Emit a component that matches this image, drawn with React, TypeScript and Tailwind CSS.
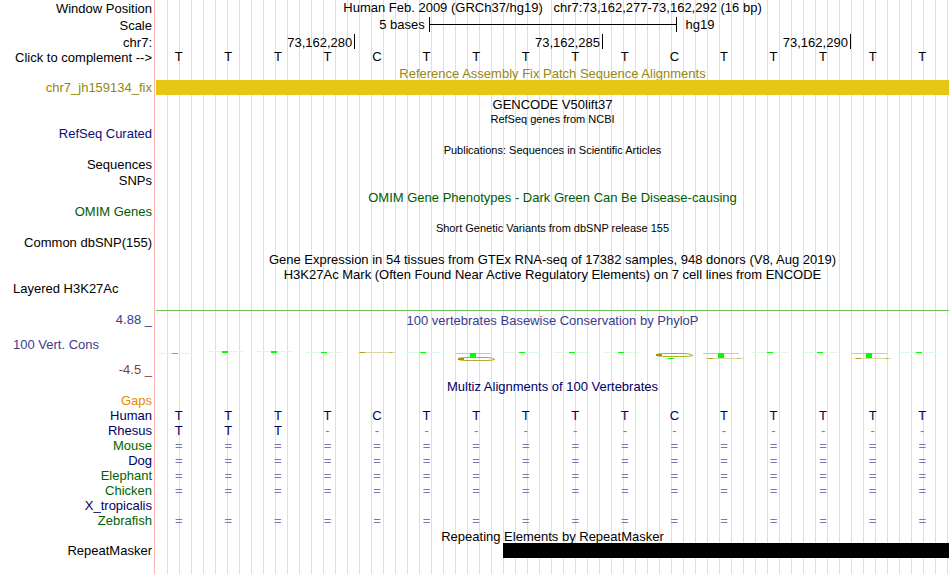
const SEQUENCE = "TTTTCTTTTTCTTTTT";

const labels = [
  { text: "Window Position", className: "h-4" },
  { text: "Scale", className: "h-[17px]" },
  { text: "chr7:", className: "h-[17px]" },
  { text: "Click to complement -->", className: "h-[15px]" },
  { text: "chr7_jh159134_fix", className: "h-[30px] text-[#968710]" },
  { text: "RefSeq Curated", className: "h-[46px] text-[#0c0c78]" },
  { text: "Sequences", className: "h-[31px]" },
  { text: "SNPs", className: "h-4" },
  { text: "OMIM Genes", className: "h-[31px] text-[#005a00]" },
  { text: "Common dbSNP(155)", className: "h-[31px]" },
  { text: "Layered H3K27Ac", className: "h-[46px]", left: true },
  { text: "4.88 _", className: "h-[31px] text-[#3c3c8c]" },
  { text: "100 Vert. Cons", className: "h-[25px] text-[#3c3c8c]", left: true },
  { text: "-4.5 _", className: "h-[25px] text-[#8c3c3c]" },
  { text: "Gaps", className: "h-[31px] text-[#e68c00]" },
  { text: "Human", className: "h-[15px] text-[#000064]" },
  { text: "Rhesus", className: "h-[15px] text-[#000064]" },
  { text: "Mouse", className: "h-[15px] text-[#006400]" },
  { text: "Dog", className: "h-[15px] text-[#000064]" },
  { text: "Elephant", className: "h-[15px] text-[#006400]" },
  { text: "Chicken", className: "h-[15px] text-[#006400]" },
  { text: "X_tropicalis", className: "h-[15px] text-[#000064]" },
  { text: "Zebrafish", className: "h-[15px] text-[#006400]" },
  { text: "RepeatMasker", className: "h-[30px]" },
];

const alignments = [
  { species: "Human", bases: SEQUENCE },
  { species: "Rhesus", bases: "TTT-------------" },
  { species: "Mouse", bases: "================" },
  { species: "Dog", bases: "================" },
  { species: "Elephant", bases: "================" },
  { species: "Chicken", bases: "================" },
  { species: "X_tropicalis", bases: "                " },
  { species: "Zebrafish", bases: "================" },
];

// One entry per base: where its flattened T sits and how tall the stem is.
const scores = [
  { y: 25, stem: 1 },
  { y: 23, stem: 2 },
  { y: 23, stem: 2 },
  { y: 24, stem: 1 },
  { y: 24, stem: 0, line: true },
  { y: 24, stem: 1 },
  { y: 25, stem: 4, strong: true, oval: 29 },
  { y: 24, stem: 1 },
  { y: 24, stem: 1 },
  { y: 24, stem: 1 },
  { y: 30, stem: 1, oval: 25 },
  { y: 25, stem: 5, strong: true, line: true },
  { y: 24, stem: 1 },
  { y: 24, stem: 1 },
  { y: 25, stem: 5, strong: true, line: true },
  { y: 24, stem: 1 },
];

function TrackTitle({ text, className = "" }: { text: string; className?: string }) {
  return <h2 className={`flex items-end justify-center whitespace-pre ${className}`}>{text}</h2>;
}

function BaseRow({ bases, className = "" }: { bases: string; className?: string }) {
  return (
    <div className={`grid h-[15px] grid-cols-16 text-center ${className}`}>
      {bases.split("").map((base, index) => (
        <span key={index} className={/[-=]/.test(base) ? "pr-1 text-[#7878b4]" : "pr-1"}>
          {base}
        </span>
      ))}
    </div>
  );
}

function ScaleBar() {
  return (
    <div className="flex h-[17px] items-end">
      <span className="w-[34.4%] pr-1 text-right">5 bases</span>
      <div className="flex h-[15px] w-[31.25%] items-center border-x border-black">
        <div className="h-px w-full bg-black" />
      </div>
      <span className="pl-[9px]">hg19</span>
    </div>
  );
}

function Ruler() {
  return (
    <div className="grid grid-cols-16 pt-[2px] text-right leading-[17px]">
      <span className="col-span-4 h-[15px] pr-[2px]">73,162,280</span>
      <span className="col-span-5 h-[15px] border-l border-black pr-[2px]">73,162,285</span>
      <span className="col-span-5 h-[15px] border-l border-black pr-[2px]">73,162,290</span>
      <span className="col-span-2 h-[15px] border-l border-black" />
    </div>
  );
}

function Oval({ x, y }: { x: number; y: number }) {
  return (
    <g shapeRendering="auto">
      <path
        d={`M${x + 39} ${y + 2}Q${x + 37} ${y + 0.5} ${x + 31} ${y + 0.5}H${x + 12}Q${x + 4} ${y + 0.5} ${x + 3} ${y + 2}Q${x + 4} ${y + 3.5} ${x + 12} ${y + 3.5}H${x + 31}Q${x + 38} ${y + 3.5} ${x + 40} ${y + 2.4}`}
        fill="none"
        stroke="#b4aa32"
      />
      <rect x={x + 3} y={y + 1} width="6" height="2" fill="#a09600" />
    </g>
  );
}

function ConservationLogo() {
  return (
    <svg viewBox="0 0 793 51" preserveAspectRatio="none" className="block h-[51px] w-full" aria-hidden="true">
      {scores.map((score, index) => {
        const x = Math.round(1 + index * 49.6);
        const lineY = score.strong ? 30 : 24;
        return (
          <g key={index} shapeRendering="crispEdges">
            {score.stem > 0 && <rect x={x} y={score.y} width="36" height="1" fill={score.strong ? "#78fa8c" : "#dcfae1"} />}
            {score.stem > 0 && <rect x={x + 15} y={score.y} width="6" height={score.stem} fill="#00ff00" />}
            {score.line && (
              <>
                <rect x={x + 3} y={lineY} width="37" height="1" fill="#dcd7a5" />
                <rect x={x + 5} y={lineY} width="5" height="1" fill="#aaa01e" />
                <rect x={x + 34} y={lineY} width="3" height="1" fill="#bcb450" />
              </>
            )}
            {score.oval && <Oval x={x} y={score.oval} />}
          </g>
        );
      })}
    </svg>
  );
}

export default function App() {
  return (
    <main className="flex min-h-screen bg-white pr-px font-['Liberation_Sans',Arial,sans-serif] text-[13px] leading-[15px] text-black">
      <div className="w-[154px] shrink-0 pr-[2px] pl-[13px]">
        {labels.map((label) => (
          <div
            key={label.text}
            className={`flex items-end whitespace-nowrap ${label.left ? "justify-start" : "justify-end"} ${label.className}`}
          >
            {label.text}
          </div>
        ))}
      </div>

      <div className="mr-px w-px shrink-0 bg-[#ffb4b4]" />

      <div className="min-w-0 flex-1 bg-[repeating-linear-gradient(to_right,transparent_0px_11px,#dcdcf5_11px_12px)]">
        <TrackTitle text="Human Feb. 2009 (GRCh37/hg19)   chr7:73,162,277-73,162,292 (16 bp)" className="h-[15px]" />
        <ScaleBar />
        <Ruler />
        <BaseRow bases={SEQUENCE} />

        <TrackTitle text="Reference Assembly Fix Patch Sequence Alignments" className="h-4 leading-[13px] text-[#968710]" />
        <div className="relative h-[15px] bg-[#e6c814]" />

        <TrackTitle text="GENCODE V50lift37" className="h-[17px]" />
        <TrackTitle text="RefSeq genes from NCBI" className="h-[15px] text-[11px]" />
        <TrackTitle text="Publications: Sequences in Scientific Articles" className="h-[31px] text-[11px]" />
        <TrackTitle text="OMIM Gene Phenotypes - Dark Green Can Be Disease-causing" className="h-[47px] text-[#005a00]" />
        <TrackTitle text="Short Genetic Variants from dbSNP release 155" className="h-[31px] text-[11px]" />
        <TrackTitle
          text="Gene Expression in 54 tissues from GTEx RNA-seq of 17382 samples, 948 donors (V8, Aug 2019)"
          className="h-[31px]"
        />
        <TrackTitle
          text="H3K27Ac Mark (Often Found Near Active Regulatory Elements) on 7 cell lines from ENCODE"
          className="h-[15px]"
        />
        <div className="h-[29px] border-b border-[#6ec25a]" />

        <TrackTitle text="100 vertebrates Basewise Conservation by PhyloP" className="h-[17px] text-[#3c3c8c]" />
        <ConservationLogo />

        <TrackTitle text="Multiz Alignments of 100 Vertebrates" className="h-[15px] text-[#000064]" />
        <div className="pt-[14px] text-[#000064]">
          {alignments.map((row) => (
            <BaseRow key={row.species} bases={row.bases} />
          ))}
        </div>

        <TrackTitle text="Repeating Elements by RepeatMasker" className="h-[15px] leading-[13px]" />
        <div className="relative ml-[43.75%] h-[15px] bg-black" />
      </div>
    </main>
  );
}
